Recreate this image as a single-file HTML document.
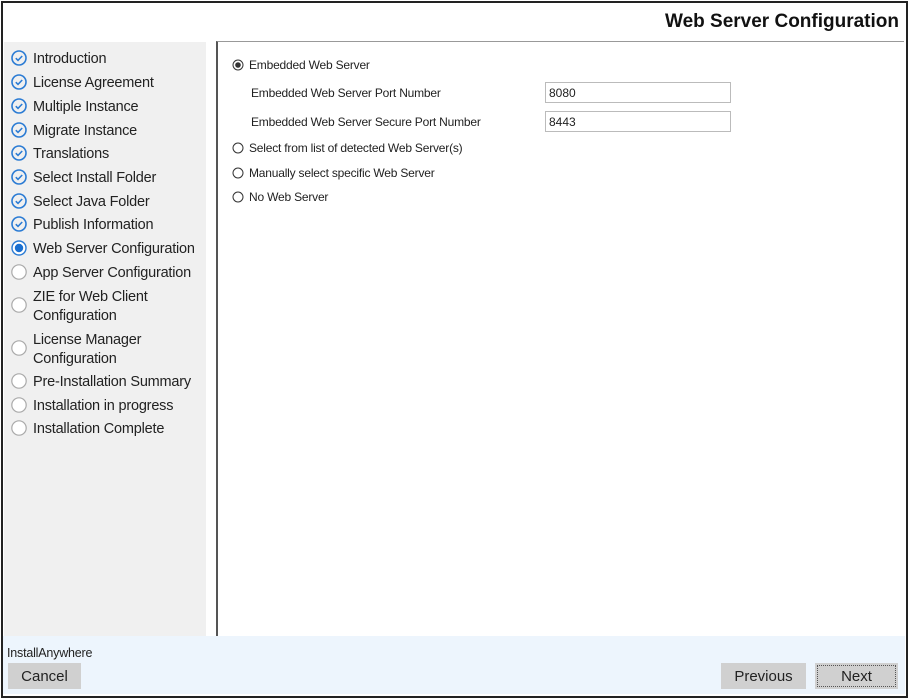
<!DOCTYPE html>
<html><head><style>
body{margin:0;width:911px;height:700px;background:#fff;position:relative;overflow:hidden;font-family:"Liberation Sans",Arial,sans-serif;}
.frame{position:absolute;left:1px;top:1px;width:903px;height:693px;border:2px solid #222;}
.title{position:absolute;right:12px;top:11px;font-size:19px;font-weight:bold;color:#111;}
.side{position:absolute;left:4px;top:42px;width:202px;height:594px;background:#f0f0f0;}
.it{position:absolute;left:8px;font-size:14.5px;color:#222;line-height:19px;letter-spacing:-0.2px}
.ic{position:absolute;left:11px;width:16px;height:16px;}
.panel{position:absolute;left:216px;top:41px;width:686px;height:595px;border-left:2px solid #555;border-top:1px solid #999;background:#fff;}
.t{position:absolute;font-size:12px;color:#222;letter-spacing:-0.2px}
.inp{position:absolute;left:545px;width:186px;height:21px;border:1px solid #bbb;font-size:12px;line-height:21px;padding-left:3px;box-sizing:border-box;color:#222}
.bot{position:absolute;left:3px;top:636px;width:902px;height:58px;background:#edf5fd;}
.btn{position:absolute;top:663px;height:26px;background:#d0d0d0;font-size:15px;color:#222;text-align:center;line-height:28px;box-sizing:border-box;}
</style></head><body>
<div class="frame"></div>
<div class="title">Web Server Configuration</div>
<div class="side"></div>
<svg width="0" height="0" style="position:absolute"><defs>
<g id="ck"><circle cx="8" cy="8" r="7" fill="none" stroke="#2a7bd4" stroke-width="1.6"/><path d="M4.8 8.2l2.2 2.2 4.2-4.4" fill="none" stroke="#2a7bd4" stroke-width="1.6"/></g>
<g id="cur"><circle cx="8" cy="8" r="7" fill="#fff" stroke="#2a7bd4" stroke-width="1.4"/><circle cx="8" cy="8" r="4.2" fill="#1a6fd0"/></g>
<g id="em"><circle cx="8" cy="8" r="7.2" fill="#fff" stroke="#aaa" stroke-width="1.2"/></g>
</defs></svg>
<svg class="ic" style="top:50px"><use href="#ck"/></svg><div class="it" style="left:33px;top:50px">Introduction</div>
<svg class="ic" style="top:74px"><use href="#ck"/></svg><div class="it" style="left:33px;top:74px">License Agreement</div>
<svg class="ic" style="top:98px"><use href="#ck"/></svg><div class="it" style="left:33px;top:98px">Multiple Instance</div>
<svg class="ic" style="top:122px"><use href="#ck"/></svg><div class="it" style="left:33px;top:122px">Migrate Instance</div>
<svg class="ic" style="top:145px"><use href="#ck"/></svg><div class="it" style="left:33px;top:145px">Translations</div>
<svg class="ic" style="top:169px"><use href="#ck"/></svg><div class="it" style="left:33px;top:169px">Select Install Folder</div>
<svg class="ic" style="top:193px"><use href="#ck"/></svg><div class="it" style="left:33px;top:193px">Select Java Folder</div>
<svg class="ic" style="top:216px"><use href="#ck"/></svg><div class="it" style="left:33px;top:216px">Publish Information</div>
<svg class="ic" style="top:240px"><use href="#cur"/></svg><div class="it" style="left:33px;top:240px">Web Server Configuration</div>
<svg class="ic" style="top:264px"><use href="#em"/></svg><div class="it" style="left:33px;top:264px">App Server Configuration</div>
<svg class="ic" style="top:297px"><use href="#em"/></svg><div class="it" style="left:33px;top:288px">ZIE for Web Client<br>Configuration</div>
<svg class="ic" style="top:340px"><use href="#em"/></svg><div class="it" style="left:33px;top:331px">License Manager<br>Configuration</div>
<svg class="ic" style="top:373px"><use href="#em"/></svg><div class="it" style="left:33px;top:373px">Pre-Installation Summary</div>
<svg class="ic" style="top:397px"><use href="#em"/></svg><div class="it" style="left:33px;top:397px">Installation in progress</div>
<svg class="ic" style="top:420px"><use href="#em"/></svg><div class="it" style="left:33px;top:420px">Installation Complete</div>
<div class="panel"></div>
<svg style="position:absolute;left:232px;top:59px" width="13" height="13"><circle cx="6" cy="6" r="5" fill="#fff" stroke="#333"/><circle cx="6" cy="6" r="2.8" fill="#333"/></svg>
<div class="t" style="left:249px;top:58px">Embedded Web Server</div>
<div class="t" style="left:251px;top:86px">Embedded Web Server Port Number</div>
<div class="inp" style="top:82px">8080</div>
<div class="t" style="left:251px;top:115px">Embedded Web Server Secure Port Number</div>
<div class="inp" style="top:111px">8443</div>
<svg style="position:absolute;left:232px;top:142px" width="13" height="13"><circle cx="6" cy="6" r="5" fill="#fff" stroke="#333"/></svg>
<div class="t" style="left:249px;top:141px">Select from list of detected Web Server(s)</div>
<svg style="position:absolute;left:232px;top:167px" width="13" height="13"><circle cx="6" cy="6" r="5" fill="#fff" stroke="#333"/></svg>
<div class="t" style="left:249px;top:166px">Manually select specific Web Server</div>
<svg style="position:absolute;left:232px;top:191px" width="13" height="13"><circle cx="6" cy="6" r="5" fill="#fff" stroke="#333"/></svg>
<div class="t" style="left:249px;top:190px">No Web Server</div>
<div class="bot"></div>
<div class="t" style="left:7px;top:646px;font-size:12.5px">InstallAnywhere</div>
<div class="btn" style="left:8px;width:73px">Cancel</div>
<div class="btn" style="left:721px;width:85px">Previous</div>
<div class="btn" style="left:815px;width:83px;border:1px solid #d0d0d0;outline:1px dotted #555;outline-offset:-3px;line-height:26px">Next</div>
</body></html>
